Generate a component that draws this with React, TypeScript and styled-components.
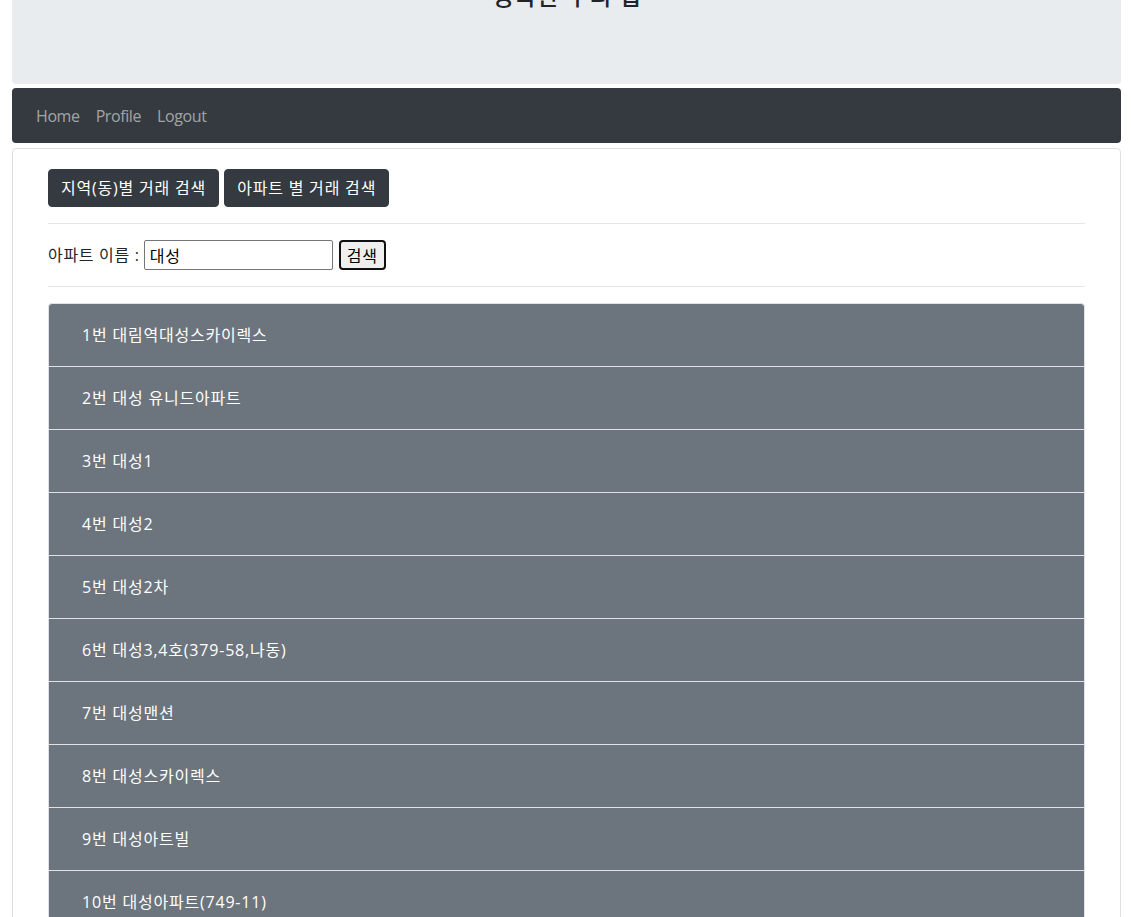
import React from "react";
import styled, { createGlobalStyle } from "styled-components";

const Global = createGlobalStyle`
  html, body { margin: 0; padding: 0; background: #fff; }
  body {
    font-family: "Open Sans", "Noto Sans CJK KR", sans-serif;
    font-size: 16px;
    line-height: 1.5;
    color: #212529;
    letter-spacing: 0.7px;
  }
  * { box-sizing: border-box; }
`;

const Page = styled.div`
  padding: 0 10px 0 12px;
  display: flex;
  flex-direction: column;
  gap: 4px;
`;

const Header = styled.header`
  margin-top: -41px;
  background: #e9ecef;
  border-radius: 0 0 4px 4px;
  padding: 23px 16px 73px;
  text-align: center;
`;

const Title = styled.h1`
  margin: 0;
  font-size: 24px;
  font-weight: 500;
  line-height: 1.2;
  color: #212529;
`;

const NavBar = styled.nav`
  background: #343a40;
  border-radius: 4px;
  padding: 8px 16px 7px;
  display: flex;
  align-items: center;
`;

const NavLink = styled.a`
  color: rgba(255, 255, 255, 0.55);
  text-decoration: none;
  padding: 8px 8px;
  font-size: 16px;
  line-height: 24px;
  letter-spacing: -0.4px;
`;

const Card = styled.main`
  margin-top: 1px;
  border: 1px solid rgba(0, 0, 0, 0.125);
  border-radius: 4px;
  padding: 20px 35px;
`;

const ButtonRow = styled.div`
  display: flex;
  gap: 5px;
`;

const DarkButton = styled.button`
  font-family: inherit;
  font-size: 16px;
  line-height: 24px;
  letter-spacing: 0.8px;
  padding: 6px 12px;
  color: #fff;
  background: #343a40;
  border: 1px solid #343a40;
  border-radius: 4px;
  cursor: pointer;
`;

const Rule = styled.hr`
  margin: 16px 0;
  border: 0;
  border-top: 1px solid rgba(0, 0, 0, 0.1);
`;

const SearchRow = styled.div`
  display: flex;
  align-items: center;
  height: 30px;
  gap: 4px;
`;

const Label = styled.label`
  font-size: 16px;
  color: #212529;
`;

const TextInput = styled.input`
  width: 189px;
  height: 30px;
  font-family: inherit;
  font-size: 16px;
  letter-spacing: 0.7px;
  padding: 1px 5px;
  border: 1px solid #767676;
  border-radius: 2px;
  color: #000;
`;

const PlainButton = styled.button`
  margin-left: 2px;
  height: 30px;
  font-family: inherit;
  font-size: 16px;
  letter-spacing: 0.7px;
  padding: 0 6px;
  background: #efefef;
  color: #000;
  border: 2px solid #101010;
  border-radius: 4px;
`;

const List = styled.ul`
  list-style: none;
  margin: 0;
  padding: 0;
  display: flex;
  flex-direction: column;
`;

const Item = styled.li`
  background: #6c757d;
  color: #fff;
  border: 1px solid #dee2e6;
  border-top-width: 0;
  padding: 19px 33px 19px;
  font-size: 16px;
  line-height: 24px;
  letter-spacing: 0.8px;
  &:first-child {
    border-top-width: 1px;
    border-radius: 4px 4px 0 0;
  }
`;

const items = [
  "대림역대성스카이렉스",
  "대성 유니드아파트",
  "대성1",
  "대성2",
  "대성2차",
  "대성3,4호(379-58,나동)",
  "대성맨션",
  "대성스카이렉스",
  "대성아트빌",
  "대성아파트(749-11)",
];

export default function App() {
  return (
    <>
      <Global />
      <Page>
        <Header>
          <Title>행복한 우리 집</Title>
        </Header>
        <NavBar>
          <NavLink href="#">Home</NavLink>
          <NavLink href="#">Profile</NavLink>
          <NavLink href="#">Logout</NavLink>
        </NavBar>
        <Card>
          <ButtonRow>
            <DarkButton>지역(동)별 거래 검색</DarkButton>
            <DarkButton>아파트 별 거래 검색</DarkButton>
          </ButtonRow>
          <Rule />
          <SearchRow>
            <Label>아파트 이름 :</Label>
            <TextInput defaultValue="대성" />
            <PlainButton>검색</PlainButton>
          </SearchRow>
          <Rule />
          <List>
            {items.map((name, i) => (
              <Item key={i}>
                {i + 1}번 {name}
              </Item>
            ))}
          </List>
        </Card>
      </Page>
    </>
  );
}
